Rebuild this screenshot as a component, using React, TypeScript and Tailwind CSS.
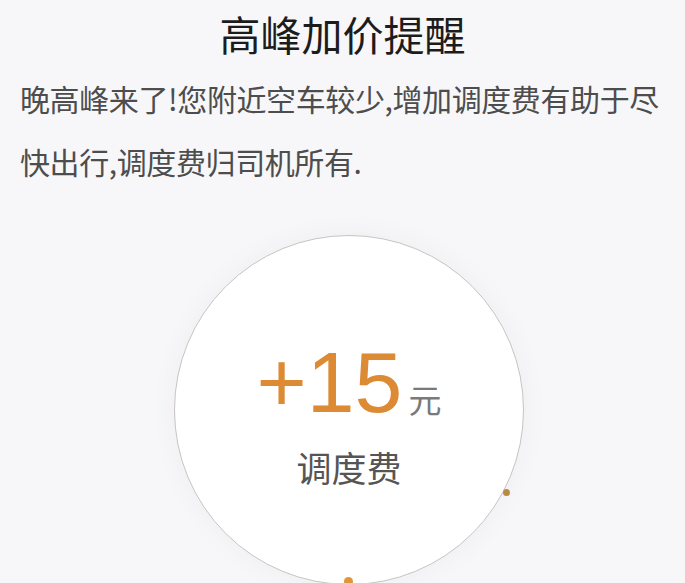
import React from "react";

const cjk = {
  fontFamily: '"Noto Sans CJK SC", "Liberation Sans", sans-serif',
};

function FeeCircle() {
  return (
    <div className="relative ml-[13px] mt-[42px] h-[350px] w-[350px] shrink-0 rounded-full border border-[#c9c3c3] bg-white shadow-[0_0_30px_rgba(0,0,0,0.04)]">
      <div className="flex h-full flex-col items-center pt-[103px]">
        <div className="flex items-end">
          <span
            className="text-[86px] leading-[86px] text-[#dd8a35]"
            style={{ fontFamily: '"Liberation Sans", Arial, sans-serif' }}
          >
            +15
          </span>
          <span className="mb-[6px] ml-[6px] text-[33px] leading-[40px] text-[#7a7a7a]" style={cjk}>
            元
          </span>
        </div>
        <div className="mt-[20px] text-[35px] leading-[44px] text-[#555]" style={cjk}>
          调度费
        </div>
      </div>
      <span className="absolute left-[328px] top-[253px] h-[7px] w-[7px] rounded-full bg-[#b98a45]" />
      <span className="absolute left-[169px] top-[341px] h-[9px] w-[9px] rounded-full bg-[#e0953a]" />
    </div>
  );
}

export default function App() {
  return (
    <div className="flex h-[583px] w-[685px] flex-col items-center overflow-hidden bg-[#f7f7f9]" style={cjk}>
      <h1 className="mt-[6px] text-[41px] leading-[54px] text-[#1c1c1c]">高峰加价提醒</h1>
      <p className="mt-[7px] w-full whitespace-nowrap px-[20px] text-[30px] leading-[63px] tracking-[-0.4px] text-[#4d4d4d]">
        晚高峰来了!您附近空车较少,增加调度费有助于尽
        <br />
        快出行,调度费归司机所有.
      </p>
      <FeeCircle />
    </div>
  );
}
